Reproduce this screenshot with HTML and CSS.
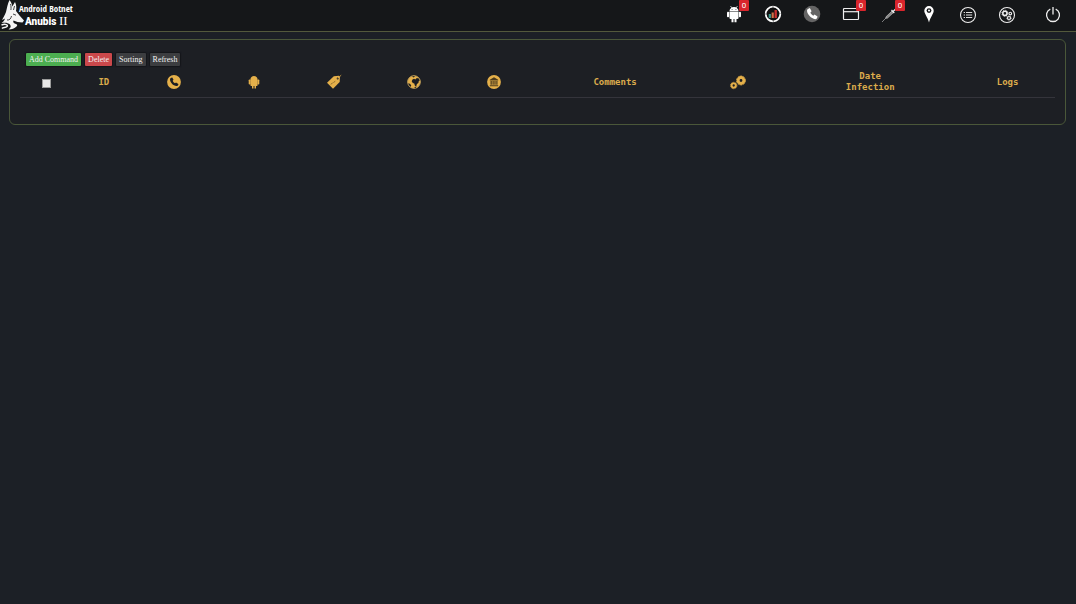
FILE: index.html
```html
<!DOCTYPE html>
<html lang="en">
<head>
<meta charset="utf-8">
<title>Bots</title>
<link rel="stylesheet" href="styles.css">
</head>
<body>
<header class="topbar">
  <a class="brand" href="#">
    <svg class="brand-mark" viewBox="0 0 24 30" aria-hidden="true">
      <path fill="#f4f4f4" d="M9.500 0C11 2 12 4 12.300 6.500L15 2C16.500 5 16.500 8 16 11l3.500 4.500L24 20.500l-1.500 2-5-.5-4-1.500c-1 1.500.5 3 2.500 3.500 1.500.4 1.500 1.500.5 2.500-2 2-4.500 3-8 3 2-1.500 3-3 1.500-5C8 22.500 5 22.500 1.500 23c2-1.500 3-2.500 3.500-4.500L2 20c1.500-3 3-5 4-8C7 8 7.500 4 9.500 0z"/>
      <path fill="none" stroke="#f4f4f4" stroke-width="1.500" d="M1.500 25c4-1.500 7 0 5.500 1.500S3 27 2 28.500"/>
      <path fill="none" stroke="#151719" stroke-width=".8" d="M10.500 4c.7 2 .6 4 .4 6M14.500 6l-1 4M13 14l3 1.200M7 20c3 .5 4-2 4.500-4"/>
    </svg>
    <span class="brand-text"><span class="brand-top">Android Botnet</span><span class="brand-name">Anubis <span class="brand-num">II</span></span></span>
  </a>
  <nav class="nav" aria-label="Main">
    <a class="nav-link" href="#" aria-label="Bots">
      <svg class="icon" viewBox="0 0 18 18"><g fill="#fff"><path d="M4.500 6a4.500 4 0 0 1 9 0zM4.500 6.500h9V13q0 1-1 1h-1v3.200h-2V14h-1v3.200h-2V14h-1q-1 0-1-1z"/><rect x="2" y="6.700" width="2.100" height="5.500" rx=".9"/><rect x="13.900" y="6.700" width="2.100" height="5.500" rx=".9"/></g><path stroke="#fff" stroke-width=".7" d="M5.500 1l1.500 2M12.500 1L11 3"/><path fill="#777" d="M6.600 4h1v.9h-1zM10.400 4h1v.9h-1z"/></svg>
      <span class="badge">0</span>
    </a>
    <a class="nav-link" href="#" aria-label="Statistics">
      <svg class="icon" viewBox="0 0 18 18"><circle cx="9" cy="9" r="7.300" fill="#111" stroke="#fff" stroke-width="1.800" stroke-dasharray="11 .47"/><path fill="#3d9b8e" d="M4.700 9h2.200v4H4.700z"/><path fill="#cf7048" d="M7.600 7.500h2.200V13H7.600z"/><path fill="#c82f2e" d="M10.500 5h2.400v8h-2.400z"/></svg>
    </a>
    <a class="nav-link" href="#" aria-label="Calls">
      <svg class="icon" viewBox="0 0 18 18"><circle cx="9" cy="9" r="8.300" fill="#656565"/><path fill="#fff" d="M5.500 3.700l1.300-.6L8.600 6.300 7.400 7.500c.4 1.400 1.500 2.500 2.900 3.200l1.200-1.100 3 1.900c-.1 1.600-1 2.700-2.300 2.800C8 13.500 4.300 9.500 4 5.800c0-.9.600-1.700 1.500-2.100z"/></svg>
    </a>
    <a class="nav-link" href="#" aria-label="Cards">
      <svg class="icon" viewBox="0 0 18 18"><rect x="1.500" y="3.500" width="15" height="11" rx=".7" fill="none" stroke="#eee" stroke-width="1.200"/><path stroke="#eee" stroke-width="1.200" d="M1.500 6.700h15"/></svg>
      <span class="badge">0</span>
    </a>
    <a class="nav-link" href="#" aria-label="Injections">
      <svg class="icon" viewBox="0 0 18 18"><path stroke="#999" stroke-width=".8" d="M1 17l5-5"/><path fill="#888" stroke="#ccc" stroke-width=".6" d="M5 11.800l6-5.800 1.500 1.500-6 5.600-1.800.2z"/><path stroke="#eee" stroke-width="1.200" d="M10.500 5l2.800 3M12 6.500l3.500-3.200"/></svg>
      <span class="badge">0</span>
    </a>
    <a class="nav-link" href="#" aria-label="Map">
      <svg class="icon" viewBox="0 0 18 18"><path fill="#fff" d="M9 1a4.700 4.700 0 0 1 4.700 4.700C13.700 8.700 10.300 12 9 17.500 7.700 12 4.300 8.700 4.300 5.700A4.700 4.700 0 0 1 9 1z"/><circle cx="9" cy="5.600" r="2.400" fill="#151719"/><circle cx="9" cy="5.600" r="1" fill="#fff"/></svg>
    </a>
    <a class="nav-link" href="#" aria-label="Commands">
      <svg class="icon icon-low" viewBox="0 0 18 18"><circle cx="9" cy="9" r="7.500" fill="none" stroke="#eee" stroke-width="1.100"/><path stroke="#ddd" stroke-width="1" d="M4.700 6.500H6M7 6.500h6.200M4.700 9H6M7 9h6.200M4.700 11.500H6M7 11.500h6.200"/></svg>
    </a>
    <a class="nav-link" href="#" aria-label="Settings">
      <svg class="icon icon-low" viewBox="0 0 18 18"><g fill="none" stroke="#eee"><circle cx="9" cy="9" r="7.500" stroke-width="1.100"/><circle cx="6.900" cy="7.300" r="2.100" stroke-width="1.500"/><circle cx="6.900" cy="7.300" r="3" stroke-width=".9" stroke-dasharray="1.300 1.060"/><circle cx="11" cy="12" r="1.500" stroke-width="1.200"/><circle cx="11" cy="12" r="2.200" stroke-width=".7" stroke-dasharray="1 .73"/><circle cx="12.300" cy="7.600" r="1.300" stroke-width="1.100"/></g></svg>
    </a>
    <a class="nav-link nav-exit" href="#" aria-label="Log out">
      <svg class="icon icon-low" viewBox="0 0 18 18"><path fill="none" stroke="#eee" stroke-width="1.300" d="M6.300 3.100a6.500 6.500 0 1 0 5.400 0M9 1v7.500"/></svg>
    </a>
  </nav>
</header>
<main class="panel">
  <div class="actions">
    <button class="btn btn-add" type="button">Add Command</button>
    <button class="btn btn-delete" type="button">Delete</button>
    <button class="btn" type="button">Sorting</button>
    <button class="btn" type="button">Refresh</button>
  </div>
  <table class="bots">
    <colgroup><col class="col-check"><col class="col-id"><col class="col-icon"><col class="col-icon"><col class="col-icon"><col class="col-icon"><col class="col-icon"><col class="col-comments"><col class="col-gears"><col class="col-date"><col class="col-logs"></colgroup>
    <thead>
      <tr>
        <th><input class="check" type="checkbox" aria-label="Select all"></th>
        <th>ID</th>
        <th aria-label="Phone"><svg class="col-svg" viewBox="0 0 14 14"><circle cx="7" cy="7" r="6.900" fill="#e5b04a"/><path fill="#1c1e23" d="M4.200 2.800l1.100-.3 1.200 2.300-.8 1c.4 1 1.200 1.900 2.300 2.400l1-.8 2.400 1.500c-.1 1.300-.8 2.100-1.900 2.200C6 10.500 3.200 7.500 3 4.400c.1-.8.500-1.300 1.200-1.600z"/></svg></th>
        <th aria-label="Android"><svg class="col-svg" viewBox="0 0 14 14"><g fill="#e5b04a"><path d="M3.400 4.600C3.500 2.400 5 1 7 1s3.500 1.400 3.600 3.600v5.600q0 .8-.8.800H9v2.500H7.500V11h-1v2.500H5V11h-.8q-.8 0-.8-.8z"/><rect x="1.700" y="4.500" width="1.800" height="5" rx=".8"/><rect x="10.500" y="4.500" width="1.800" height="5" rx=".8"/></g></svg></th>
        <th aria-label="Tag"><svg class="col-svg" viewBox="0 0 14 14"><path fill="#e5b04a" d="M6.800 1.200L12 .8l.9 1.200-.2 5L6 13.800 0 7.800z"/><circle cx="10.700" cy="3.400" r="1" fill="#1c1e23"/><path fill="none" stroke="#e5b04a" stroke-width=".8" d="M10.700 3.400L14.200.2"/><path stroke="#8d6b2d" stroke-width="1" stroke-dasharray="1.500 .5" d="M3.700 9.300l5-3.300"/></svg></th>
        <th aria-label="Country"><svg class="col-svg" viewBox="0 0 14 14"><circle cx="7" cy="7" r="6.300" fill="#e5b04a" stroke="#c5a25a" stroke-width="1"/><path fill="#1c1e23" d="M5.500 4.500L7 3.700l1.300.7 1.500-1.500 2 .6.900 2.300-.9.300-.4 1.800-1.500 1.200-.7 2.300-1.400-.8-.5-2.200L5.800 8 4.700 6.200zM1.200 8.200l1.700.5 1.300 1.500-.3 1.600C2.400 11 1.500 9.800 1.200 8.200zM5 1.500l2-.6 1 .7-1.500.9zM7 12.200l2.500-.6-.8 1.300z"/></svg></th>
        <th aria-label="Bank"><svg class="col-svg" viewBox="0 0 14 14"><circle cx="7" cy="7" r="6.900" fill="#e5b04a"/><path fill="#4b3a1c" d="M7 2.300l4.200 2.400v.8H2.800v-.8zM3.500 6h1.300v3.700H3.500zM5.500 6h1.200v3.700H5.500zM7.400 6h1.200v3.700H7.400zM9.300 6h1.200v3.700H9.300zM2.800 10.200h8.400v1.100H2.800z"/></svg></th>
        <th>Comments</th>
        <th aria-label="Settings"><svg class="col-svg" viewBox="0 0 14 14"><g fill="none" stroke="#e5b04a"><circle cx="10" cy="5.500" r="2.900" stroke-width="3"/><circle cx="10" cy="5.500" r="4.500" stroke-width=".8" stroke-dasharray="2 .83"/><circle cx="2.700" cy="10.500" r="2.100" stroke-width="1.900"/><circle cx="2.700" cy="10.500" r="3.200" stroke-width=".7" stroke-dasharray="1.500 .51"/></g></svg></th>
        <th>Date<br>Infection</th>
        <th>Logs</th>
      </tr>
    </thead>
  </table>
</main>
</body>
</html>
```
FILE: styles.css
```css
* { box-sizing: border-box; }
body {
  margin: 0;
  min-height: 100vh;
  background: #1c2026;
  color: #dcab4c;
}
.topbar {
  display: flex;
  justify-content: space-between;
  height: 32px;
  background: #151719;
  border-bottom: 1px solid #53593c;
}
.brand {
  display: flex;
  color: #fff;
  text-decoration: none;
}
.brand-mark { width: 24px; height: 30px; margin-right: -5px; }
.brand-text {
  display: flex;
  flex-direction: column;
  padding-top: 3px;
  white-space: nowrap;
}
.brand-top { font: bold 9px/12px "Open Sans Condensed", "Liberation Sans Narrow", sans-serif; }
.brand-name { padding-left: 6px; font: 900 10px/12px Roboto, sans-serif; }
.brand-num { font: 13px/12px "Liberation Serif", serif; }
.nav { display: flex; padding-right: 3px; }
.nav-link {
  position: relative;
  display: flex;
  justify-content: center;
  width: 39px;
  padding-top: 5px;
}
.nav-exit { width: 40px; margin-left: 7px; }
.icon { width: 18px; height: 18px; }
.icon-low { margin-top: 1px; }
.badge {
  position: absolute;
  top: 0;
  left: 25px;
  width: 10px;
  border-radius: 1px;
  background: #d9252c;
  color: #fff;
  font: 8px/11px Roboto, sans-serif;
  text-align: center;
}
.panel {
  margin: 7px 10px 0 9px;
  padding: 13px 10px 26px;
  border: 1px solid #4a5739;
  border-radius: 6px;
  background: #1d1f24;
}
.actions {
  display: flex;
  gap: 4px;
  padding-left: 6px;
}
.btn {
  height: 13px;
  padding: 0 3px;
  border: 0;
  border-radius: 1px;
  background: #3c3d40;
  box-shadow: 0 0 1px 1px #15161a;
  color: #f2f2f2;
  font: 8px/13px "Liberation Serif", serif;
}
.btn-add { background: #4cae50; }
.btn-delete { background: #cb484b; }
.bots {
  width: 100%;
  margin-top: 4px;
  table-layout: fixed;
  border-collapse: collapse;
  border-bottom: 1px solid #34343b;
}
.bots th {
  height: 26px;
  padding: 1px 0 4px;
  vertical-align: middle;
  text-align: center;
  font: bold 9px/11px "DejaVu Sans Mono", monospace;
}
.col-check { width: 5.2%; }
.col-id { width: 5.8%; }
.col-icon { width: 7.73%; }
.col-comments { width: 15.7%; }
.col-gears { width: 8.1%; }
.col-date { width: 17.4%; }
.col-logs { width: 9.15%; }
.col-svg {
  display: block;
  width: 14px;
  height: 14px;
  margin: 0 auto;
  overflow: visible;
}
.check {
  display: block;
  appearance: none;
  width: 9px;
  height: 9px;
  margin: 2px auto 0;
  border: 1px solid #9b9b9b;
  background: #e8e8e8;
}
.check:checked { background: #dcab4c; }
```
